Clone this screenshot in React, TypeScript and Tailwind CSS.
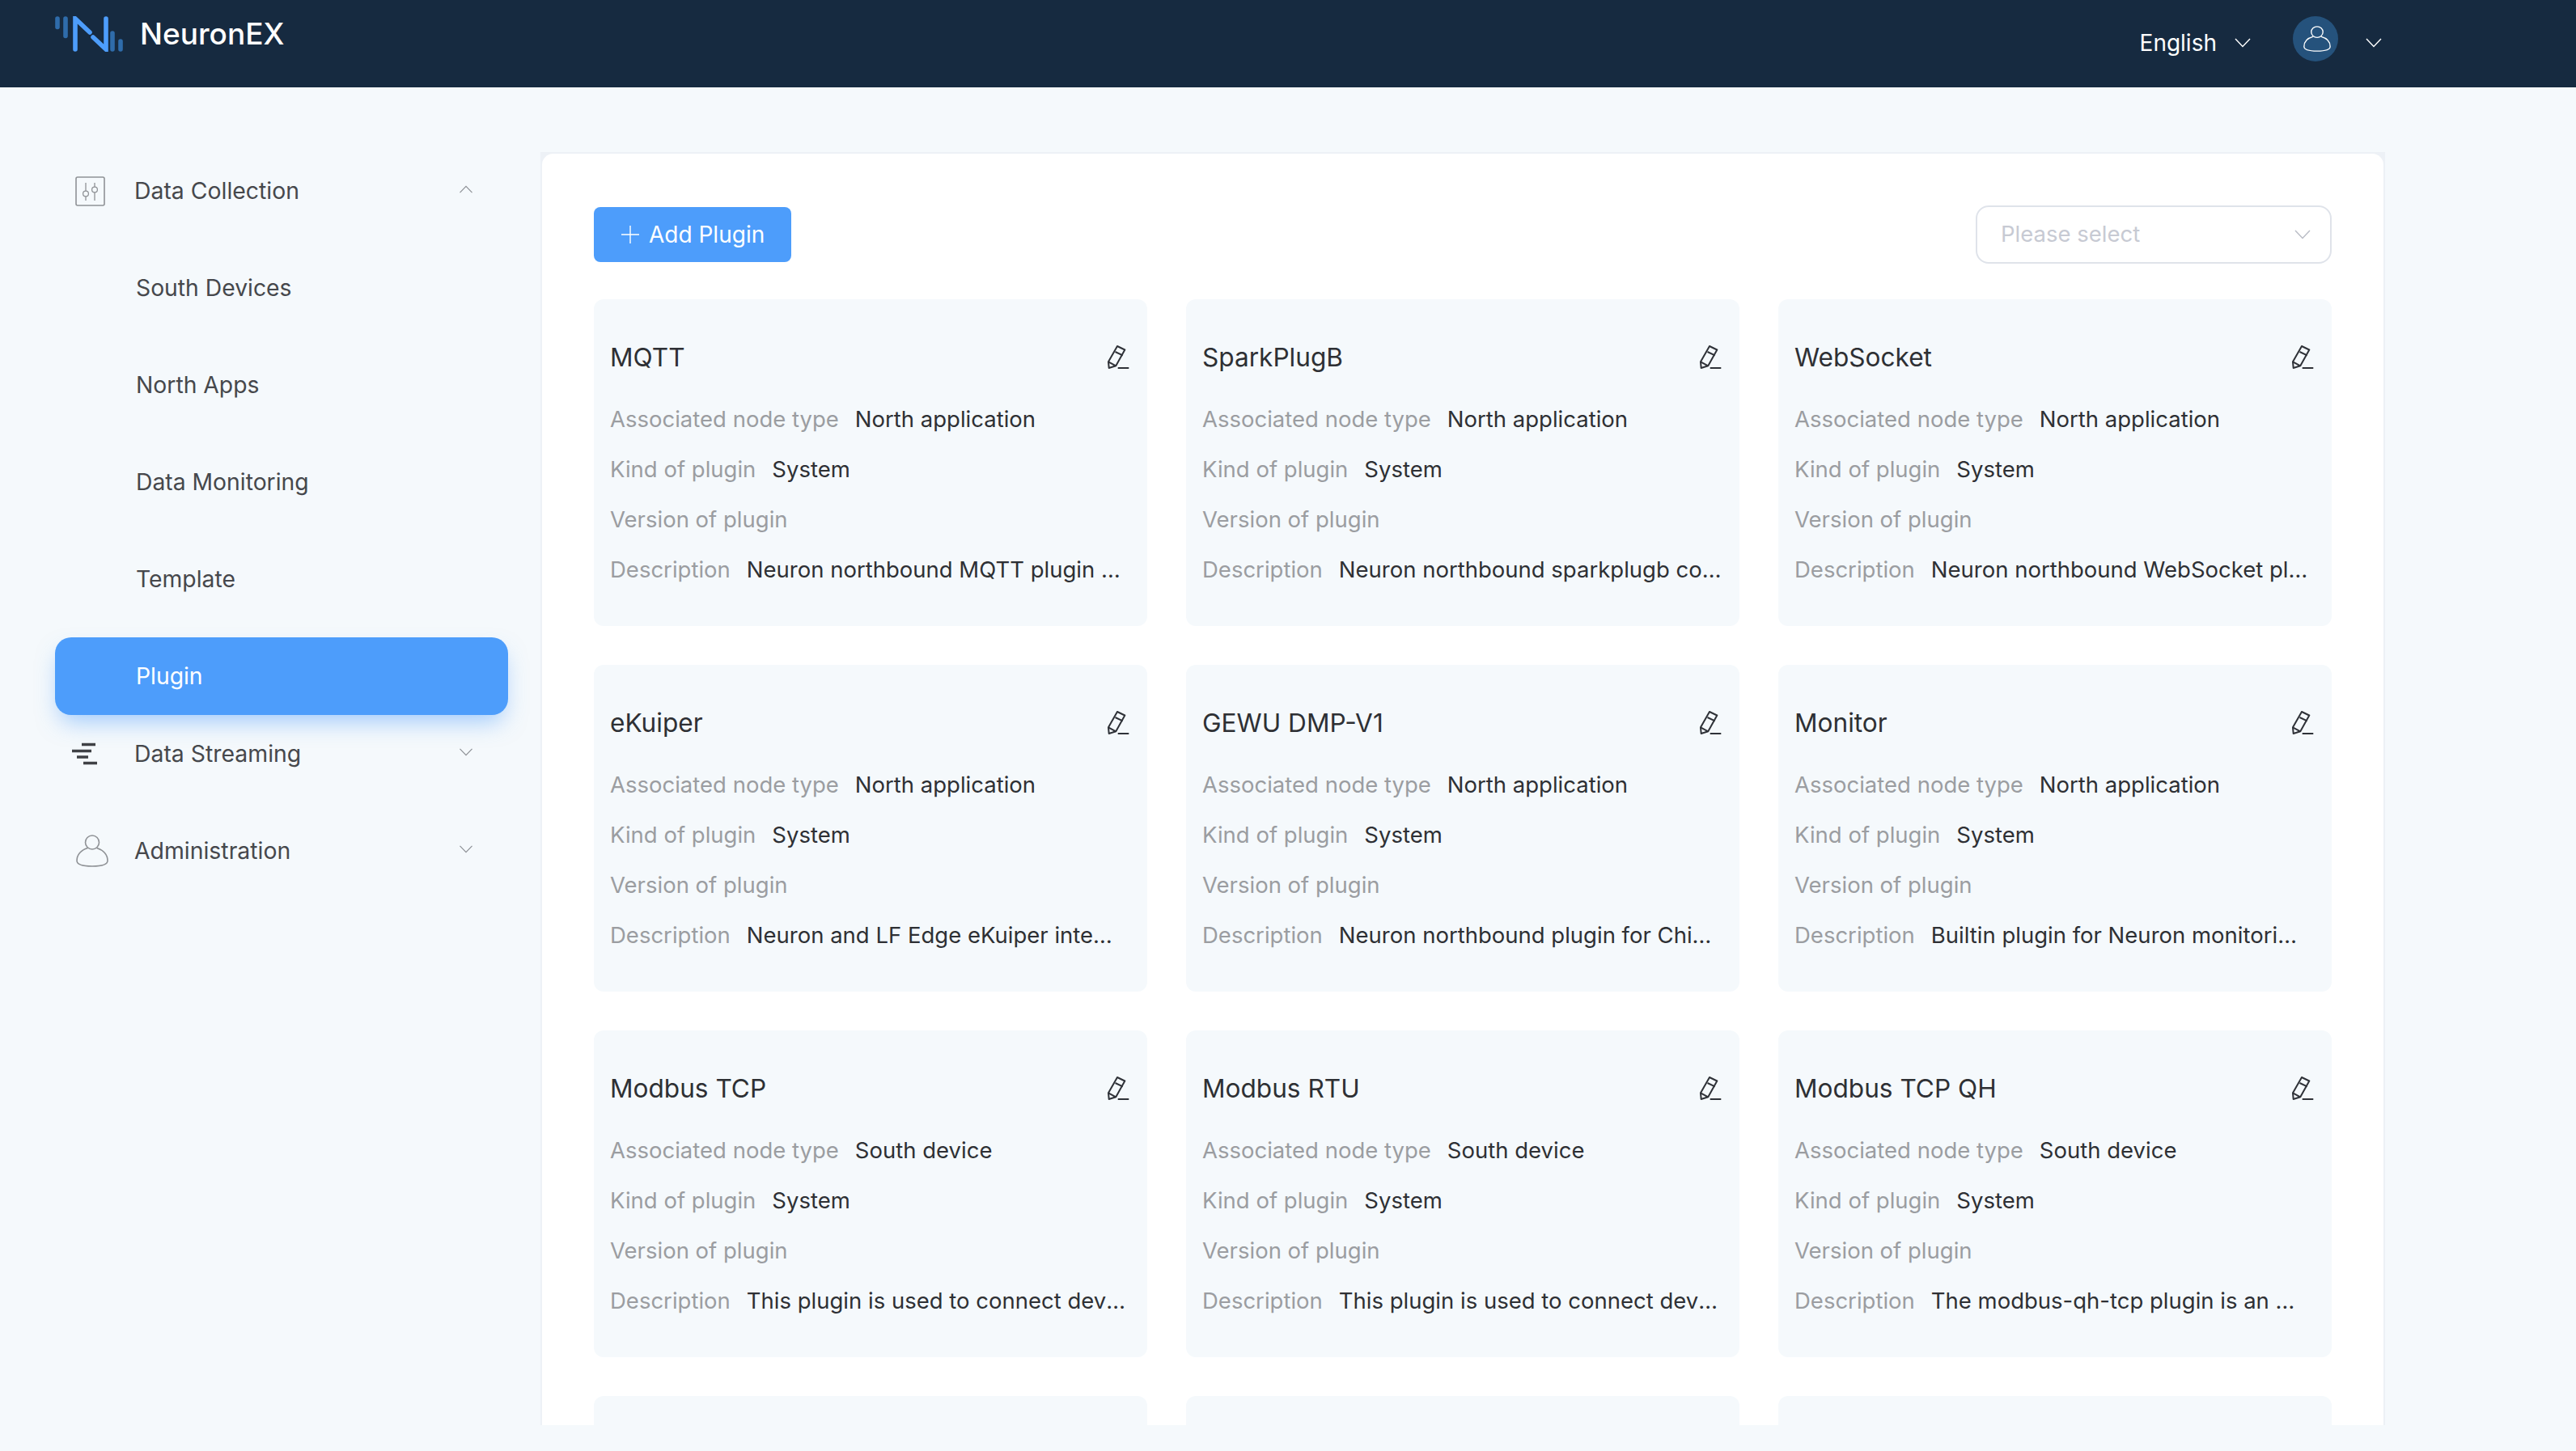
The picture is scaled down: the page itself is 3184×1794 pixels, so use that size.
import React from "react";

type Plugin = { name: string; type: string; desc: string; descClass: string };

const plugins: Plugin[] = [
  { name: "MQTT", type: "North application", desc: "Neuron northbound MQTT plugin based on NanoSDK.", descClass: "truncate min-w-0 mr-[9px]" },
  { name: "SparkPlugB", type: "North application", desc: "Neuron northbound sparkplugb common plugin", descClass: "truncate min-w-0" },
  { name: "WebSocket", type: "North application", desc: "Neuron northbound WebSocket plugin", descClass: "truncate min-w-0 mr-[9px]" },
  { name: "eKuiper", type: "North application", desc: "Neuron and LF Edge eKuiper integration plugin", descClass: "truncate min-w-0 mr-[9px]" },
  { name: "GEWU DMP-V1", type: "North application", desc: "Neuron northbound plugin for China Gewu", descClass: "truncate min-w-0 mr-[9px]" },
  { name: "Monitor", type: "North application", desc: "Builtin plugin for Neuron monitoring and alerting", descClass: "truncate min-w-0 mr-[9px]" },
  { name: "Modbus TCP", type: "South device", desc: "This plugin is used to connect devices using Modbus", descClass: "truncate min-w-0 mr-[4px]" },
  { name: "Modbus RTU", type: "South device", desc: "This plugin is used to connect devices using Modbus", descClass: "truncate min-w-0 mr-[4px]" },
  { name: "Modbus TCP QH", type: "South device", desc: "The modbus-qh-tcp plugin is an enhanced version", descClass: "truncate min-w-0 mr-[14px]" },
];

function Chevron({ up, className }: { up?: boolean; className: string }) {
  return (
    <svg viewBox="0 0 20 12" fill="none" stroke="currentColor" strokeWidth="1.4" className={className}>
      <path d={up ? "M1 11 L10 1.5 L19 11" : "M1 1 L10 10.5 L19 1"} />
    </svg>
  );
}

function EditIcon() {
  return (
    <svg viewBox="0 0 27 30" fill="none" stroke="#2f3238" strokeWidth="2" className="w-[27px] h-[30px]">
      <path d="M12 1 L21.3 5.5 L10.3 25.3 L1.7 28 L1 20.3 Z" strokeLinejoin="round" />
      <path d="M9.5 8 L18.7 12.3 M1 20.3 L10.3 25.3" />
      <path d="M12.7 28 H26.3" />
    </svg>
  );
}

function PersonIcon({ className }: { className: string }) {
  return (
    <svg viewBox="0 0 40 40" preserveAspectRatio="none" fill="none" stroke="currentColor" strokeWidth="1.6" className={className}>
      <ellipse cx="20" cy="9.5" rx="8.5" ry="8.5" />
      <path d="M14.5 16.5 C6 19 1 25 1 32 C1 37 8 39 20 39 C32 39 39 37 39 32 C39 25 34 19 25.5 16.5" />
    </svg>
  );
}

function Logo() {
  return (
    <svg viewBox="0 0 84 44" fill="none" strokeLinecap="round" strokeWidth="5.6" className="w-[84px] h-[44px]">
      <path d="M3 3 V13.5 M13 3 V24.5 M71 21 V41 M81 31 V41" stroke="#2f6cab" />
      <path d="M25 41 V3 L43 20 M47 26 L63 41 V3" stroke="#4d9dfb" />
    </svg>
  );
}

function SlidersIcon() {
  return (
    <svg viewBox="0 0 37 37" fill="none" stroke="#8f9296" strokeWidth="1.6" className="w-[37px] h-[37px]">
      <rect x="1" y="1" width="35" height="35" rx="2" />
      <path d="M13 8 V18 M13 25 V30 M24 8 V13 M24 20 V30" strokeWidth="1.3" />
      <circle cx="13" cy="21.5" r="3.4" strokeWidth="1.3" />
      <circle cx="24" cy="16.5" r="3.4" strokeWidth="1.3" />
    </svg>
  );
}

function StreamIcon() {
  return (
    <svg viewBox="0 0 32 28" fill="none" stroke="#3f4145" strokeWidth="3.4" className="w-[32px] h-[28px] blur-[0.6px]">
      <path d="M13 2.5 H30 M1 10.5 H25 M7 18 H21 M15 25.5 H32" />
    </svg>
  );
}

function GroupHead({ icon, label, up, iconBox }: { icon: React.ReactNode; label: string; up?: boolean; iconBox: string }) {
  return (
    <div className="h-[96px] flex items-center pr-[43px] text-[#46484c]">
      <div className={iconBox}>{icon}</div>
      <span className="flex-1 text-[28.4px] leading-[40px]">{label}</span>
      <Chevron up={up} className="w-[18px] h-[10px] text-[#8d9095] -mt-[4px]" />
    </div>
  );
}

function SubItem({ label, active }: { label: string; active?: boolean }) {
  return (
    <div
      className={
        active
          ? "h-[96px] flex items-center pl-[100px] rounded-[20px] bg-[#4d9dfb] text-white text-[28.3px] shadow-[0_14px_28px_-6px_rgba(77,157,251,0.5)]"
          : "h-[96px] flex items-center pl-[100px] text-[#46484c] text-[28.3px]"
      }
    >
      {label}
    </div>
  );
}

function Card({ p }: { p: Plugin }) {
  const label = "text-[#9b9da1] mr-[20px] shrink-0";
  const row = "h-[62px] flex items-center text-[27.5px] text-[#2e3034] min-w-0";
  return (
    <div className="bg-[#f5f9fc] rounded-[12px] pt-[50px] pb-[38px] px-[20px] min-w-0">
      <div className="h-[44px] flex items-center justify-between mb-[24px] pr-[2px]">
        <span className="text-[31.6px] leading-[44px] text-[#2e3034]">{p.name}</span>
        <EditIcon />
      </div>
      <div className={row}><span className={label}>Associated node type</span><span>{p.type}</span></div>
      <div className={row}><span className={label}>Kind of plugin</span><span>System</span></div>
      <div className={row}><span className={label}>Version of plugin</span></div>
      <div className={row}><span className={label}>Description</span><span className={p.descClass}>{p.desc}</span></div>
    </div>
  );
}

export default function App() {
  return (
    <div className="w-[3184px] h-[1794px] overflow-hidden bg-[#f5f9fc] font-['Inter','Liberation_Sans',sans-serif]">
      <header className="h-[108px] bg-[#162a40] flex items-start pl-[68px] pr-[240px]">
        <div className="mt-[20px]"><Logo /></div>
        <span className="ml-[21px] mt-[18px] text-[37px] leading-[48px] font-medium text-white">NeuronEX</span>
        <div className="ml-auto h-[96px] flex items-center text-white">
          <span className="text-[28px] mt-[10px]">English</span>
          <Chevron className="w-[20px] h-[12px] ml-[22px] mt-[10px]" />
          <div className="ml-[52px] w-[56px] h-[56px] rounded-full bg-[#25527c] flex items-center justify-center">
            <PersonIcon className="w-[34px] h-[32px] ml-[3px]" />
          </div>
          <Chevron className="w-[20px] h-[12px] ml-[34px] mt-[10px]" />
        </div>
      </header>

      <div className="flex items-start pt-[80px] pl-[68px]">
        <nav className="w-[560px] mr-[40px]">
          <GroupHead icon={<SlidersIcon />} label="Data Collection" up iconBox="w-[98px] pl-[25px] flex items-center" />
          <div className="flex flex-col gap-[24px] mt-[24px]">
            <SubItem label="South Devices" />
            <SubItem label="North Apps" />
            <SubItem label="Data Monitoring" />
            <SubItem label="Template" />
            <SubItem label="Plugin" active />
          </div>
          <GroupHead icon={<StreamIcon />} label="Data Streaming" iconBox="w-[98px] pl-[20px] flex items-center" />
          <div className="mt-[24px]">
            <GroupHead icon={<PersonIcon className="w-[40px] h-[40px] text-[#8f9296]" />} label="Administration" iconBox="w-[98px] pl-[26px] flex items-center" />
          </div>
        </nav>

        <main className="w-[2280px] h-[1574px] bg-[#edf1f6] pt-[2px] px-[2px] overflow-hidden">
          <div className="h-full bg-white rounded-t-[14px] px-[64px] pt-[64px] overflow-hidden">
            <div className="h-[72px] mb-[44px] flex items-center justify-between">
              <button className="h-[68px] w-[244px] rounded-[8px] bg-[#4d9dfb] text-white text-[28px] flex items-center pl-[34px] gap-[12px]">
                <svg viewBox="0 0 22 22" fill="none" stroke="currentColor" strokeWidth="1.4" className="w-[22px] h-[22px]">
                  <path d="M11 0 V22 M0 11 H22" />
                </svg>
                Add Plugin
              </button>
              <div className="w-[440px] h-[72px] rounded-[16px] border-2 border-[#dfe3ea] bg-white flex items-center justify-between pl-[29px] pr-[24px] text-[27.5px] text-[#c7cad3]">
                <span>Please select</span>
                <Chevron className="w-[20px] h-[12px] text-[#b9bcc5]" />
              </div>
            </div>
            <div className="grid grid-cols-3 gap-[48px]">
              {plugins.map((p) => (
                <Card key={p.name} p={p} />
              ))}
              <div className="h-[404px] bg-[#f5f9fc] rounded-[12px]" />
              <div className="h-[404px] bg-[#f5f9fc] rounded-[12px]" />
              <div className="h-[404px] bg-[#f5f9fc] rounded-[12px]" />
            </div>
          </div>
        </main>
      </div>
    </div>
  );
}
